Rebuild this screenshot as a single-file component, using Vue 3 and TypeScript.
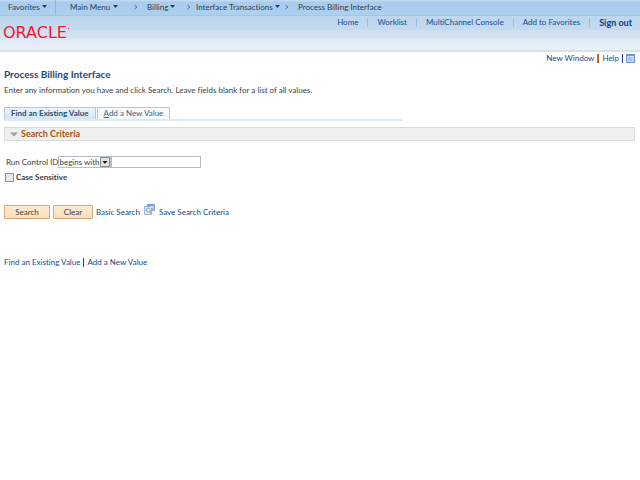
<script setup lang="ts">
import { ref } from 'vue'

interface Crumb {
  label: string
  menu: boolean
  slot: string
}

const crumbs: Crumb[] = [
  { label: 'Favorites', menu: true, slot: 'favorites' },
  { label: 'Main Menu', menu: true, slot: 'main' },
  { label: 'Billing', menu: true, slot: 'billing' },
  { label: 'Interface Transactions', menu: true, slot: 'interface' },
  { label: 'Process Billing Interface', menu: false, slot: 'current' },
]

const links: string[] = ['Home', 'Worklist', 'MultiChannel Console', 'Add to Favorites']
const operator = ref('begins with')
const runControlId = ref('')
const caseSensitive = ref(false)

function clearSearch(): void {
  operator.value = 'begins with'
  runControlId.value = ''
  caseSensitive.value = false
}
</script>

<template>
  <div class="page">
    <header>
      <nav class="crumbs" aria-label="Breadcrumb">
        <div v-for="(crumb, i) in crumbs" :key="crumb.label" class="crumb" :class="crumb.slot">
          <svg v-if="i > 1" class="chevron" viewBox="0 0 4 6" aria-hidden="true">
            <path d="M0.5 1 2.9 3 0.5 5" fill="none" stroke="#3d6386" stroke-width="0.9" />
          </svg>
          <button v-if="crumb.menu" type="button" class="crumb-button">
            <span>{{ crumb.label }}</span>
            <svg class="caret" viewBox="0 0 5 3" aria-hidden="true"><path d="M0 0h5L2.5 3z" fill="#253e58" /></svg>
          </button>
          <span v-else>{{ crumb.label }}</span>
        </div>
      </nav>
      <div class="banner">
        <a class="logo" href="#">ORACLE<span class="mark"></span></a>
        <nav class="links" aria-label="Portal">
          <a v-for="link in links" :key="link" href="#">{{ link }}</a>
          <a class="sign-out" href="#">Sign out</a>
        </nav>
      </div>
    </header>

    <main>
      <div class="tools">
        <a href="#">New Window</a>
        <i class="bar orange"></i>
        <a href="#">Help</a>
        <i class="bar purple"></i>
        <a class="grid-link" href="#" aria-label="Personalize page">
          <svg viewBox="0 0 9 9" aria-hidden="true">
            <path d="M0 0h9v9H0z" fill="#7196d8" />
            <path d="M1 2h7v6H1z" fill="#dbe7fa" />
            <path d="M1 4h5M1 6h5M3 2v6M5 3v5" stroke="#8eade2" stroke-width="0.7" />
            <path d="M6 3h2v5H6z" fill="#bfd3f5" />
          </svg>
        </a>
      </div>

      <h1>Process Billing Interface</h1>
      <p class="hint">Enter any information you have and click Search. Leave fields blank for a list of all values.</p>

      <div class="tabs">
        <button type="button" class="tab active">Find an Existing Value</button>
        <button type="button" class="tab"><u>A</u>dd a New Value</button>
      </div>

      <h2>
        <svg viewBox="0 0 8 5" aria-hidden="true"><path d="M0 0.5h8L4 4.5z" fill="#a0a0a0" /></svg>
        <span>Search Criteria</span>
      </h2>

      <form @submit.prevent>
        <div class="field">
          <label for="run-control">Run Control ID</label>
          <span class="select-wrap">
            <select v-model="operator" aria-label="Run Control ID operator">
              <option>begins with</option>
              <option>contains</option>
              <option>=</option>
            </select>
            <svg class="drop" viewBox="0 0 10 10" aria-hidden="true">
              <path d="M0.5 0.5h9v9h-9z" fill="#e3e3e3" stroke="#8d8d8d" />
              <path d="M2.5 4h5L5 6.8z" fill="#000" />
            </svg>
          </span>
          <input id="run-control" v-model="runControlId" class="text" type="text" />
        </div>
        <div class="check">
          <input id="case-sensitive" v-model="caseSensitive" type="checkbox" />
          <label for="case-sensitive">Case Sensitive</label>
        </div>
        <div class="actions">
          <button type="submit" class="action wide">Search</button>
          <button type="button" class="action" @click="clearSearch">Clear</button>
          <a href="#">Basic Search</a>
          <svg class="save-icon" viewBox="0 0 11 11" aria-hidden="true">
            <path d="M3.5 0.5h7v6h-7z" fill="#8fb8ee" stroke="#6f9ade" stroke-width="0.8" />
            <path d="M3.5 1h7" stroke="#5f8fd8" />
            <path d="M0.5 2.5h7v8h-7z" fill="#dce9f8" stroke="#83a8d7" stroke-width="0.8" />
            <circle cx="4.2" cy="6" r="2" fill="#f6fbff" stroke="#6c9ac9" stroke-width="0.9" />
            <path d="m5.6 7.5 2.6 2.6" stroke="#c99a4a" stroke-width="1.2" />
            <path d="m6.4 4.6 2.1-2.1M6.7 2.3h2v2" fill="none" stroke="#e9f3ff" stroke-width="0.8" />
          </svg>
          <a href="#">Save Search Criteria</a>
        </div>
      </form>

      <nav class="bottom" aria-label="Search mode">
        <a href="#">Find an Existing Value</a>
        <i class="bar dark"></i>
        <a href="#">Add a New Value</a>
      </nav>
    </main>
  </div>
</template>

<style>
body {
  margin: 0;
  background: #fff;
}
</style>

<style scoped>
.page {
  font: 8px/10px Lato, "Liberation Sans", Arial, sans-serif;
  font-variant-ligatures: none;
  color: #404040;
}
.page * {
  box-sizing: border-box;
}
a {
  color: #16498a;
  text-decoration: none;
  white-space: nowrap;
}
button, input, select {
  margin: 0;
  font: inherit;
  font-variant-ligatures: none;
  color: inherit;
}
button {
  padding: 0;
  cursor: pointer;
}
svg {
  display: block;
  flex: none;
}
.crumbs {
  display: flex;
  align-items: stretch;
  height: 16px;
  background: linear-gradient(#bfdaf0 0 1px, #aacbed 2px, #acd0ee 100%);
  border-bottom: 1px solid #a4c6e2;
  color: #263f5a;
}
.crumb {
  display: flex;
  align-items: center;
  padding-bottom: 2px;
  white-space: nowrap;
}
.crumb-button {
  display: flex;
  align-items: center;
  gap: 2px;
  border: 0;
  background: none;
}
.favorites {
  width: 56px;
  padding-left: 8px;
  border-right: 1px solid #8fb5d8;
}
.main {
  width: 78px;
  padding-left: 14px;
}
.main .crumb-button {
  gap: 3px;
}
.billing {
  width: 53px;
}
.interface {
  width: 98px;
}
.chevron {
  width: 4px;
  height: 6px;
  margin-right: 9px;
}
.interface .chevron {
  margin-right: 5px;
}
.caret {
  width: 5px;
  height: 3px;
}
.banner {
  display: flex;
  justify-content: space-between;
  height: 36px;
  padding: 0 8px 0 3px;
  background: linear-gradient(#bdd7ef 0, #c3d9f0 13px, #cfe0f1 15px, #d5e4f4 22px, #e1ebf7 24px, #e9f1f9 34px);
  border-bottom: 2px solid #d9e1e9;
}
.logo {
  display: flex;
  align-items: center;
  height: 33px;
  font: 16px/16px "DejaVu Sans", sans-serif;
  color: #ed1b2a;
}
.mark {
  width: 1px;
  height: 1px;
  margin: 0 0 8px 1px;
  background: #ed1b2a;
}
.links {
  display: flex;
  align-items: center;
  height: 13px;
}
.links a {
  line-height: 9px;
}
.links a + a {
  margin-left: 9px;
  padding-left: 9px;
  border-left: 1px solid #9dbfda;
}
.links .sign-out {
  font-size: 9px;
  font-weight: bold;
  color: #0d3e7c;
}
main {
  padding: 0 5px 0 4px;
}
.tools {
  display: flex;
  justify-content: flex-end;
  align-items: center;
  gap: 3px;
  height: 12px;
}
.bar {
  width: 1px;
  height: 9px;
}
.orange {
  width: 2px;
  background: #bd632c;
}
.purple {
  background: #3f2e86;
}
.dark {
  background: #39451f;
}
.grid-link svg {
  width: 9px;
  height: 9px;
}
h1 {
  margin: 3px 0 0;
  font-size: 10px;
  line-height: 14px;
  color: #25467d;
}
.hint {
  margin: 4px 0 12px;
}
.tabs {
  display: flex;
  align-items: flex-end;
  gap: 1px;
  width: 63%;
  border-bottom: 2px solid #dce8f2;
}
.tab {
  height: 12px;
  padding: 0 6px;
  border: 1px solid #b7c8d5;
  border-bottom: 0;
  background: #f8fafb;
  line-height: 11px;
  color: #44607e;
  white-space: nowrap;
}
.tab.active {
  background: linear-gradient(#ecf4fc, #d5e5f3);
  font-weight: bold;
  color: #2a4d75;
}
h2 {
  display: flex;
  align-items: center;
  gap: 3px;
  height: 14px;
  margin: 6px 0 0;
  padding-left: 5px;
  border: 1px solid #d4dddd;
  background: #efefef;
  font-size: 9px;
  line-height: 12px;
  color: #a4560e;
}
h2 svg {
  width: 8px;
  height: 5px;
}
.field {
  display: flex;
  align-items: center;
  margin-top: 15px;
  padding-left: 2px;
}
.select-wrap {
  display: grid;
  grid-template-columns: 42px 11px;
  align-items: center;
}
select {
  grid-area: 1 / 1 / 2 / 3;
  width: 100%;
  height: 12px;
  padding: 0;
  border: 1px solid #b4bdc5;
  border-radius: 0;
  appearance: none;
  background: #fff;
}
.drop {
  grid-area: 1 / 2;
  width: 10px;
  height: 10px;
  pointer-events: none;
}
.text {
  width: 90px;
  height: 12px;
  padding: 0 2px;
  border: 1px solid #b4bdc5;
}
.check {
  display: flex;
  align-items: center;
  gap: 2px;
  margin-top: 4px;
  padding-left: 1px;
  font-weight: bold;
}
.check input {
  width: 9px;
  height: 9px;
  appearance: none;
  border: 1px solid #8f979f;
  background: #e8e8e8;
}
.check input:checked {
  background: #4a6f9a;
}
.actions {
  display: flex;
  align-items: center;
  gap: 3px;
  margin-top: 22px;
}
.action {
  width: 40px;
  height: 14px;
  border: 1px solid #d4ab78;
  border-radius: 1px;
  background: linear-gradient(#fdebd0, #f8dfbc);
  line-height: 11px;
  color: #3c3c3c;
}
.action.wide {
  width: 46px;
}
.save-icon {
  width: 11px;
  height: 11px;
  margin: 0 1px 5px;
}
.bottom {
  display: flex;
  align-items: center;
  gap: 3px;
  margin-top: 37px;
}
</style>
